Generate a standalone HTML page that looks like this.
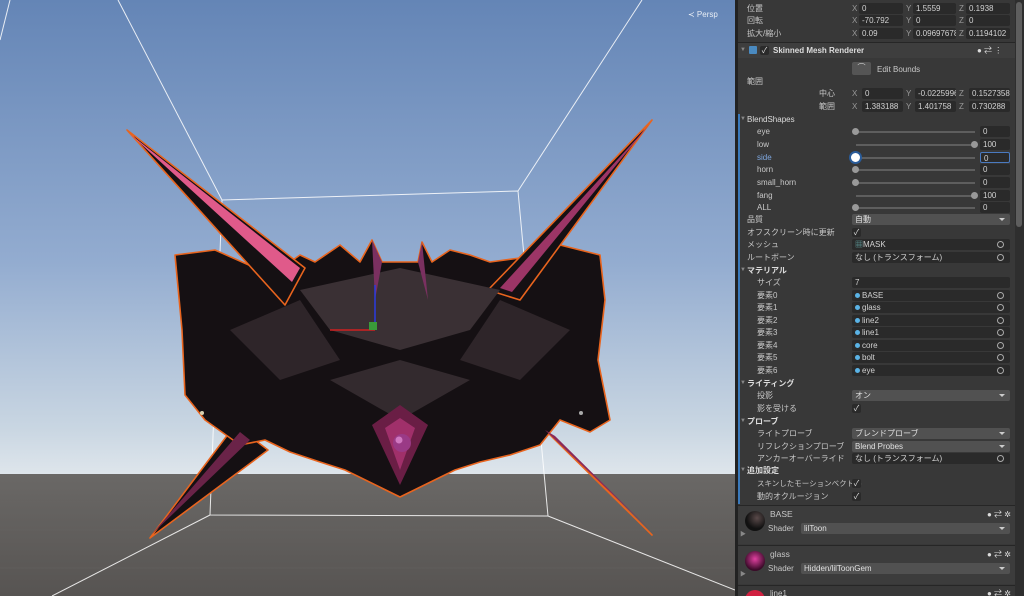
<!DOCTYPE html>
<html><head><meta charset="utf-8"><style>
*{margin:0;padding:0;box-sizing:border-box}
html{width:1024px;height:596px;overflow:hidden}
body{width:1024px;height:596px;overflow:hidden;position:relative;background:#383838;font-family:"Liberation Sans","Noto Sans CJK JP",sans-serif;font-size:8px;color:#c8c8c8}
.a{position:absolute;white-space:nowrap;line-height:11px}
.f{position:absolute;height:11px;background:#2a2a2a;border-radius:2px;line-height:11px;padding-left:3px;color:#d2d2d2;overflow:hidden}
.d{position:absolute;height:11px;background:#515151;border-radius:2px;line-height:11px;padding-left:3px;color:#e0e0e0}
.d:after{content:"";position:absolute;right:5px;top:4px;border:3px solid transparent;border-top:3px solid #ccc}
.t{position:absolute;width:11px;height:11px;right:4px;top:0}
.t:before{content:"";position:absolute;left:2px;top:2px;width:5px;height:5px;border:1px solid #aaa;border-radius:50%}
.cb{position:absolute;width:9px;height:9px;background:#2a2a2a;border-radius:2px;color:#ddd;font-size:8px;line-height:9px;text-align:center}
.sl{position:absolute;left:856px;width:119px;height:2px;background:#5e5e5e}
.kn{position:absolute;width:7px;height:7px;border-radius:50%;background:#999}
.dot{display:inline-block;width:5px;height:5px;border-radius:50%;background:#5ab3e6;margin-right:2px}
.b{font-weight:bold;color:#ddd}
.tri{color:#888;font-size:6px}
</style></head><body>
<svg width="735" height="596" style="position:absolute;left:0;top:0">
<defs><linearGradient id="sky" x1="0" y1="0" x2="0" y2="1">
<stop offset="0" stop-color="#6485b6"/><stop offset="0.55" stop-color="#93acd0"/><stop offset="0.9" stop-color="#c9d6e2"/><stop offset="1" stop-color="#dfe6ec"/></linearGradient>
<linearGradient id="gr" x1="0" y1="0" x2="0" y2="1"><stop offset="0" stop-color="#6a6866"/><stop offset="1" stop-color="#575452"/></linearGradient></defs>
<rect width="735" height="476" fill="url(#sky)"/>
<rect y="474" width="735" height="122" fill="url(#gr)"/>
<g stroke="#646260" stroke-width="0.6">
<line x1="0" y1="500" x2="735" y2="500"/><line x1="0" y1="530" x2="735" y2="530"/><line x1="0" y1="568" x2="735" y2="568"/>
</g>
<g stroke="#fff" stroke-width="1" fill="none" opacity="0.85">
<polyline points="118,0 222,200 518,191 548,516 210,515 222,200"/>
<line x1="518" y1="191" x2="642" y2="0"/>
<line x1="210" y1="515" x2="52" y2="596"/>
<line x1="548" y1="516" x2="735" y2="590"/>
<line x1="10" y1="0" x2="0" y2="40"/>
</g>
<g stroke="#e8641e" stroke-width="1.6" stroke-linejoin="round" fill="#151013">
<polygon points="150,538 235,425 268,450"/>
<polygon points="652,535 540,425 565,448"/>
<polygon points="175,255 215,250 260,270 290,262 300,255 315,262 340,245 360,262 372,240 382,262 400,262 418,262 422,242 432,262 450,250 470,255 490,262 520,258 560,245 600,255 605,300 598,360 610,420 590,432 560,420 540,445 510,455 480,462 455,470 400,497 345,470 320,462 290,452 265,440 240,445 205,420 185,395 182,330"/>
<polygon points="127,130 305,268 285,305"/>
<polygon points="652,120 488,290 520,300"/>
</g>
<polygon fill="#e05a8a" points="130,134 300,268 292,282"/>
<polygon fill="#9c3566" points="649,125 500,288 512,292"/>
<polygon fill="#6a2348" points="152,534 240,432 250,440"/>
<polygon fill="#8a2a5a" points="650,530 545,430 555,436"/>
<polygon fill="#3a3034" points="300,290 400,268 500,290 470,330 400,350 330,330"/>
<polygon fill="#2e2529" points="230,330 300,300 340,360 280,380"/>
<polygon fill="#2e2529" points="570,330 500,300 460,360 520,380"/>
<polygon fill="#332a2e" points="330,380 400,360 470,380 400,420"/>
<polygon fill="#6a1e45" points="372,425 400,405 428,425 400,485"/>
<polygon fill="#a0306a" points="385,428 400,418 415,428 400,470"/>
<polygon fill="#7a3060" points="372,240 382,262 375,300"/>
<polygon fill="#7a3060" points="422,242 418,262 428,300"/>
<circle cx="402" cy="443" r="9" fill="#9a3a86"/><circle cx="399" cy="440" r="3.5" fill="#d078c0"/>
<circle cx="202" cy="413" r="2" fill="#d8d0b0"/><circle cx="581" cy="413" r="2" fill="#aaa"/>
<line x1="375" y1="330" x2="375" y2="285" stroke="#2a3ae0" stroke-width="1.5"/>
<line x1="375" y1="330" x2="330" y2="330" stroke="#d02020" stroke-width="1.5"/>
<rect x="369" y="322" width="8" height="8" fill="#3a9a3a"/>
<text x="688" y="17" font-size="8" fill="#e8eef5" font-family="Liberation Sans">≺ Persp</text>
</svg>
<div style="position:absolute;left:735px;top:0;width:3px;height:596px;background:#222"></div>
<div style="position:absolute;left:1015px;top:0;width:9px;height:596px;background:#2e2e2e"></div>
<div style="position:absolute;left:1016px;top:2px;width:6px;height:225px;background:#5e5e5e;border-radius:3px"></div>
<div style="position:absolute;left:738px;top:114px;width:2px;height:390px;background:#3a79bb"></div>

<div class="a" style="left:747px;top:3px">位置</div>
<div class="a" style="left:747px;top:15px">回転</div>
<div class="a" style="left:747px;top:28px">拡大/縮小</div>
<div class="a" style="left:852px;top:3px;color:#999">X</div><div class="f" style="left:859px;top:3px;width:44px">0</div>
<div class="a" style="left:906px;top:3px;color:#999">Y</div><div class="f" style="left:913px;top:3px;width:43px">1.5559</div>
<div class="a" style="left:959px;top:3px;color:#999">Z</div><div class="f" style="left:966px;top:3px;width:44px">0.1938</div>
<div class="a" style="left:852px;top:15px;color:#999">X</div><div class="f" style="left:859px;top:15px;width:44px">-70.792</div>
<div class="a" style="left:906px;top:15px;color:#999">Y</div><div class="f" style="left:913px;top:15px;width:43px">0</div>
<div class="a" style="left:959px;top:15px;color:#999">Z</div><div class="f" style="left:966px;top:15px;width:44px">0</div>
<div class="a" style="left:852px;top:28px;color:#999">X</div><div class="f" style="left:859px;top:28px;width:44px">0.09</div>
<div class="a" style="left:906px;top:28px;color:#999">Y</div><div class="f" style="left:913px;top:28px;width:43px">0.09697678</div>
<div class="a" style="left:959px;top:28px;color:#999">Z</div><div class="f" style="left:966px;top:28px;width:44px">0.1194102</div>

<div style="position:absolute;left:738px;top:42px;width:277px;height:1px;background:#262626"></div>
<div style="position:absolute;left:738px;top:43px;width:277px;height:15px;background:#3e3e3e"></div>
<div class="a tri" style="left:740px;top:45px">▼</div>
<div style="position:absolute;left:749px;top:46px;width:8px;height:8px;background:#4a8ac0;border-radius:1px"></div>
<div class="cb" style="left:760px;top:46px">✓</div>
<div class="a b" style="left:773px;top:45px">Skinned Mesh Renderer</div>
<div class="a" style="left:977px;top:45px;color:#ddd">● ⇄ ⋮</div>

<div style="position:absolute;left:852px;top:62px;width:19px;height:13px;background:#555;border-radius:2px;color:#ccc;text-align:center;line-height:12px;font-size:8px">⌒</div>
<div class="a" style="left:877px;top:64px">Edit Bounds</div>
<div class="a" style="left:747px;top:76px">範囲</div>
<div class="a" style="left:819px;top:88px">中心</div>
<div class="a" style="left:819px;top:101px">範囲</div>
<div class="a" style="left:852px;top:88px;color:#999">X</div><div class="f" style="left:862px;top:88px;width:41px">0</div>
<div class="a" style="left:906px;top:88px;color:#999">Y</div><div class="f" style="left:915px;top:88px;width:41px">-0.0225996</div>
<div class="a" style="left:959px;top:88px;color:#999">Z</div><div class="f" style="left:969px;top:88px;width:41px">0.1527358</div>
<div class="a" style="left:852px;top:101px;color:#999">X</div><div class="f" style="left:862px;top:101px;width:41px">1.383188</div>
<div class="a" style="left:906px;top:101px;color:#999">Y</div><div class="f" style="left:915px;top:101px;width:41px">1.401758</div>
<div class="a" style="left:959px;top:101px;color:#999">Z</div><div class="f" style="left:969px;top:101px;width:41px">0.730288</div>

<div class="a tri" style="left:740px;top:114px">▼</div><div class="a b" style="left:747px;top:114px;font-weight:normal">BlendShapes</div>

<div class="a" style="left:757px;top:126px">eye</div><div class="sl" style="top:131px"></div><div class="kn" style="left:852px;top:128px"></div><div class="f" style="left:980px;top:126px;width:30px">0</div>
<div class="a" style="left:757px;top:139px">low</div><div class="sl" style="top:144px"></div><div class="kn" style="left:971px;top:141px"></div><div class="f" style="left:980px;top:139px;width:30px">100</div>
<div class="a" style="left:757px;top:152px;color:#7fa8e0">side</div><div class="sl" style="top:157px"></div><div class="kn" style="left:851px;top:153px;width:9px;height:9px;background:#fff;box-shadow:0 0 0 2px #2a5c9a"></div><div class="f" style="left:980px;top:152px;width:30px;border:1px solid #4a7ac0">0</div>
<div class="a" style="left:757px;top:164px">horn</div><div class="sl" style="top:169px"></div><div class="kn" style="left:852px;top:166px"></div><div class="f" style="left:980px;top:164px;width:30px">0</div>
<div class="a" style="left:757px;top:177px">small_horn</div><div class="sl" style="top:182px"></div><div class="kn" style="left:852px;top:179px"></div><div class="f" style="left:980px;top:177px;width:30px">0</div>
<div class="a" style="left:757px;top:190px">fang</div><div class="sl" style="top:195px"></div><div class="kn" style="left:971px;top:192px"></div><div class="f" style="left:980px;top:190px;width:30px">100</div>
<div class="a" style="left:757px;top:202px">ALL</div><div class="sl" style="top:207px"></div><div class="kn" style="left:852px;top:204px"></div><div class="f" style="left:980px;top:202px;width:30px">0</div>

<div class="a" style="left:747px;top:214px">品質</div><div class="d" style="left:852px;top:214px;width:158px">自動</div>
<div class="a" style="left:747px;top:227px">オフスクリーン時に更新</div><div class="cb" style="left:852px;top:228px">✓</div>
<div class="a" style="left:747px;top:239px">メッシュ</div><div class="f" style="left:852px;top:239px;width:158px"><span style="color:#6aa">▦</span>MASK<span class="t"></span></div>
<div class="a" style="left:747px;top:252px">ルートボーン</div><div class="f" style="left:852px;top:252px;width:158px">なし (トランスフォーム)<span class="t"></span></div>
<div class="a tri" style="left:740px;top:265px">▼</div><div class="a b" style="left:747px;top:265px">マテリアル</div>
<div class="a" style="left:757px;top:277px">サイズ</div><div class="f" style="left:852px;top:277px;width:158px">7</div>
<div class="a" style="left:757px;top:290px">要素0</div><div class="f" style="left:852px;top:290px;width:158px"><span class="dot"></span>BASE<span class="t"></span></div>
<div class="a" style="left:757px;top:302px">要素1</div><div class="f" style="left:852px;top:302px;width:158px"><span class="dot"></span>glass<span class="t"></span></div>
<div class="a" style="left:757px;top:315px">要素2</div><div class="f" style="left:852px;top:315px;width:158px"><span class="dot"></span>line2<span class="t"></span></div>
<div class="a" style="left:757px;top:327px">要素3</div><div class="f" style="left:852px;top:327px;width:158px"><span class="dot"></span>line1<span class="t"></span></div>
<div class="a" style="left:757px;top:340px">要素4</div><div class="f" style="left:852px;top:340px;width:158px"><span class="dot"></span>core<span class="t"></span></div>
<div class="a" style="left:757px;top:352px">要素5</div><div class="f" style="left:852px;top:352px;width:158px"><span class="dot"></span>bolt<span class="t"></span></div>
<div class="a" style="left:757px;top:365px">要素6</div><div class="f" style="left:852px;top:365px;width:158px"><span class="dot"></span>eye<span class="t"></span></div>
<div class="a tri" style="left:740px;top:378px">▼</div><div class="a b" style="left:747px;top:378px">ライティング</div>
<div class="a" style="left:757px;top:390px">投影</div><div class="d" style="left:852px;top:390px;width:158px">オン</div>
<div class="a" style="left:757px;top:403px">影を受ける</div><div class="cb" style="left:852px;top:404px">✓</div>
<div class="a tri" style="left:740px;top:416px">▼</div><div class="a b" style="left:747px;top:416px">プローブ</div>
<div class="a" style="left:757px;top:428px">ライトプローブ</div><div class="d" style="left:852px;top:428px;width:158px">ブレンドプローブ</div>
<div class="a" style="left:757px;top:441px">リフレクションプローブ</div><div class="d" style="left:852px;top:441px;width:158px">Blend Probes</div>
<div class="a" style="left:757px;top:453px">アンカーオーバーライド</div><div class="f" style="left:852px;top:453px;width:158px">なし (トランスフォーム)<span class="t"></span></div>
<div class="a tri" style="left:740px;top:465px">▼</div><div class="a b" style="left:747px;top:465px">追加設定</div>
<div class="a" style="left:757px;top:478px;font-size:7.5px">スキンしたモーションベクトル</div><div class="cb" style="left:852px;top:479px">✓</div>
<div class="a" style="left:757px;top:491px">動的オクルージョン</div><div class="cb" style="left:852px;top:492px">✓</div>

<div style="position:absolute;left:738px;top:505px;width:277px;height:1px;background:#262626"></div>
<div style="position:absolute;left:738px;top:506px;width:277px;height:38px;background:#3c3c3c"></div>
<div style="position:absolute;left:745px;top:511px;width:20px;height:20px;border-radius:50%;background:radial-gradient(circle at 60% 35%,#5a4a4a,#111 60%)"></div>
<div class="a" style="left:770px;top:509px;font-size:8.5px">BASE</div>
<div class="a" style="left:768px;top:523px">Shader</div><div class="d" style="left:801px;top:523px;width:209px">lilToon</div>
<div class="a" style="left:987px;top:509px;color:#ddd">● ⇄ ✲</div>
<div class="a tri" style="left:740px;top:530px">▶</div>
<div style="position:absolute;left:738px;top:545px;width:277px;height:1px;background:#262626"></div>
<div style="position:absolute;left:738px;top:546px;width:277px;height:38px;background:#3c3c3c"></div>
<div style="position:absolute;left:745px;top:551px;width:20px;height:20px;border-radius:50%;background:radial-gradient(circle at 50% 40%,#e040a0,#3a0a28 70%)"></div>
<div class="a" style="left:770px;top:549px;font-size:8.5px">glass</div>
<div class="a" style="left:768px;top:563px">Shader</div><div class="d" style="left:801px;top:563px;width:209px">Hidden/lilToonGem</div>
<div class="a" style="left:987px;top:549px;color:#ddd">● ⇄ ✲</div>
<div class="a tri" style="left:740px;top:570px">▶</div>
<div style="position:absolute;left:738px;top:585px;width:277px;height:1px;background:#262626"></div>
<div style="position:absolute;left:738px;top:586px;width:277px;height:10px;overflow:hidden">
<div style="position:absolute;left:7px;top:4px;width:20px;height:20px;border-radius:50%;background:#d02040"></div>
<div class="a" style="left:32px;top:2px">line1</div>
<div class="a" style="left:249px;top:2px;color:#ddd">● ⇄ ✲</div>
</div>
</body></html>
